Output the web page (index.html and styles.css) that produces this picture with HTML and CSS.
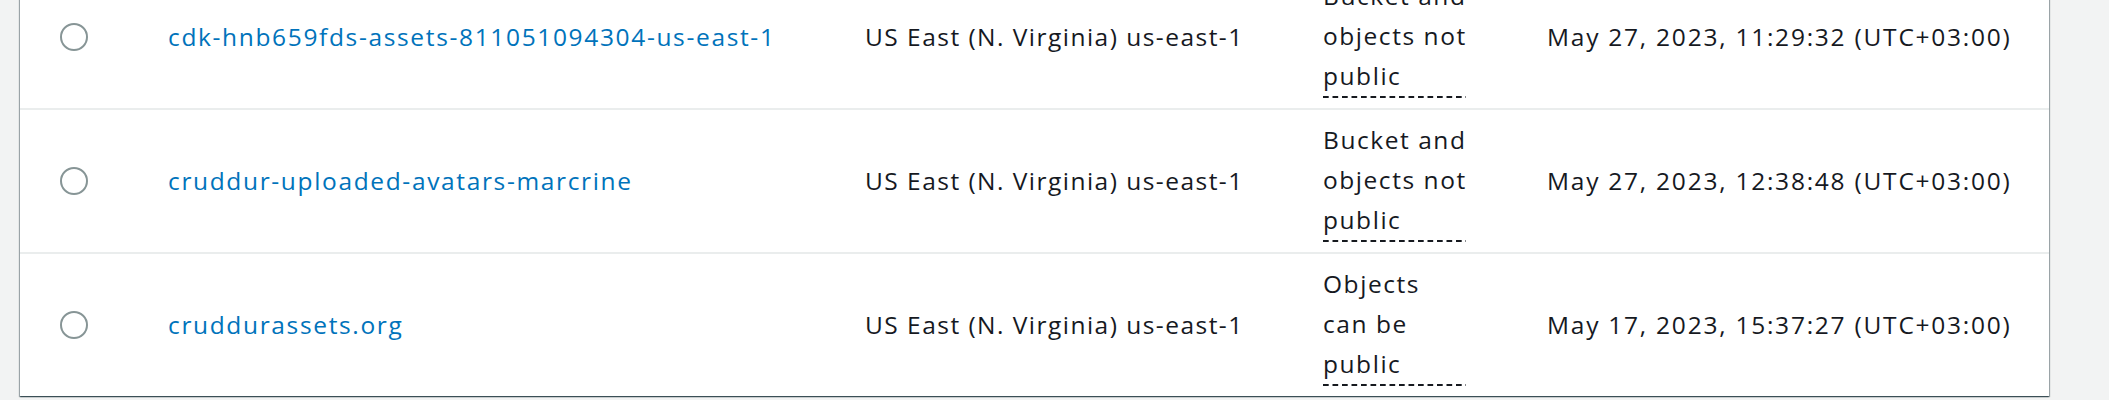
FILE: index.html
```html
<!DOCTYPE html>
<html lang="en">
<head>
<meta charset="utf-8">
<title>Buckets</title>
<link rel="stylesheet" href="styles.css">
</head>
<body>
<div class="page">
  <div class="card">
    <div class="row">
      <div class="cell cell-radio"><span class="radio"></span></div>
      <div class="cell cell-name"><a class="link" href="#">cdk-hnb659fds-assets-811051094304-us-east-1</a></div>
      <div class="cell cell-region">US East (N. Virginia) us-east-1</div>
      <div class="cell cell-access"><span class="access">Bucket and<br>objects not<br>public</span></div>
      <div class="cell cell-date">May 27, 2023, 11:29:32 (UTC+03:00)</div>
    </div>
    <div class="row">
      <div class="cell cell-radio"><span class="radio"></span></div>
      <div class="cell cell-name"><a class="link" href="#">cruddur-uploaded-avatars-marcrine</a></div>
      <div class="cell cell-region">US East (N. Virginia) us-east-1</div>
      <div class="cell cell-access"><span class="access">Bucket and<br>objects not<br>public</span></div>
      <div class="cell cell-date">May 27, 2023, 12:38:48 (UTC+03:00)</div>
    </div>
    <div class="row">
      <div class="cell cell-radio"><span class="radio"></span></div>
      <div class="cell cell-name"><a class="link" href="#">cruddurassets.org</a></div>
      <div class="cell cell-region">US East (N. Virginia) us-east-1</div>
      <div class="cell cell-access"><span class="access">Objects<br>can be<br>public</span></div>
      <div class="cell cell-date">May 17, 2023, 15:37:27 (UTC+03:00)</div>
    </div>
  </div>
</div>
</body>
</html>
```
FILE: styles.css
```css
html, body {
  margin: 0;
  padding: 0;
}
body {
  background: #f2f3f3;
  font-family: "Open Sans", "Noto Sans", "Liberation Sans", sans-serif;
  font-size: 24.5px;
  line-height: 40px;
  color: #16191f;
  overflow: hidden;
  height: 400px;
}
.page {
  padding: 0 60px 0 20px;
}
.card {
  margin-top: -34px;
  background: #ffffff;
  box-shadow: 0 1px 1px 0 rgba(0, 28, 36, 0.5), 1px 1px 1px 0 rgba(0, 28, 36, 0.3), -1px 1px 1px 0 rgba(0, 28, 36, 0.3);
}
.row {
  display: grid;
  grid-template-columns: 148px 697px 458px 224px 1fr;
  align-items: center;
  border-bottom: 2px solid #eaeded;
}
.row:last-child {
  border-bottom: 0;
}
.cell {
  white-space: nowrap;
}
.cell-radio {
  display: flex;
  padding-left: 40px;
}
.radio {
  width: 28px;
  height: 28px;
  box-sizing: border-box;
  border: 2.5px solid #879596;
  border-radius: 50%;
  background: #fff;
}
.link {
  color: #0073bb;
  text-decoration: none;
  letter-spacing: 1.65px;
}
.cell-region {
  letter-spacing: 1.47px;
}
.cell-date {
  letter-spacing: 1.76px;
}
.access {
  display: block;
  width: 143px;
  padding: 10px 0 2px;
  margin-bottom: 10px;
  letter-spacing: 1.55px;
  background-image: linear-gradient(to right, #16191f 0, #16191f 6px, transparent 6px);
  background-size: 9.5px 2px;
  background-repeat: repeat-x;
  background-position: left bottom;
}
```
